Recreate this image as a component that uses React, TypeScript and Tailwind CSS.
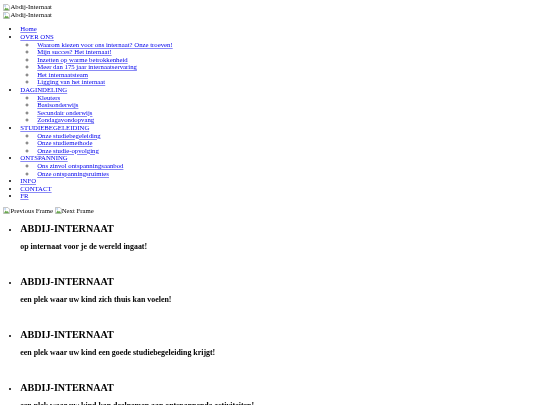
import React from 'react';

const menu = [
  { label: 'Home', items: [] },
  {
    label: 'OVER ONS',
    items: [
      'Waarom kiezen voor ons internaat? Onze troeven!',
      'Mijn succes? Het internaat!',
      'Inzetten op warme betrokkenheid',
      'Meer dan 175 jaar internaatservaring',
      'Het internaatsteam',
      'Ligging van het internaat',
    ],
  },
  { label: 'DAGINDELING', items: ['Kleuters', 'Basisonderwijs', 'Secundair onderwijs', 'Zondagavondopvang'] },
  { label: 'STUDIEBEGELEIDING', items: ['Onze studiebegeleiding', 'Onze studiemethode', 'Onze studie-opvolging'] },
  { label: 'ONTSPANNING', items: ['Ons zinvol ontspanningsaanbod', 'Onze ontspanningsruimtes'] },
  { label: 'INFO', items: [] },
  { label: 'CONTACT', items: [] },
  { label: 'FR', items: [] },
];

const slides = [
  'op internaat voor je de wereld ingaat!',
  'een plek waar uw kind zich thuis kan voelen!',
  'een plek waar uw kind een goede studiebegeleiding krijgt!',
  'een plek waar uw kind kan deelnemen aan ontspannende activiteiten!',
];

function BrokenImage({ alt }: { alt: string }) {
  return (
    <span className="inline-flex items-end">
      <svg width="7" height="7" viewBox="0 0 16 16" className="shrink-0">
        <path d="M1 1h10l4 4v10H1z" fill="#fff" stroke="#a3a3a3" strokeWidth="1.5" />
        <path d="M2 14l4-6 3 3 2-2 3 5z" fill="#6aa84f" />
        <path d="M3 3h4v3H3z" fill="#a8c7f0" />
      </svg>
      <span>{alt}</span>
    </span>
  );
}

export default function App() {
  return (
    <div className="h-[405px] overflow-hidden bg-white p-[3.4px] font-['Liberation_Serif',serif] text-[6.75px] leading-[7.6px] text-black blur-[0.25px]">
      {/* Logos */}
      <div className="flex flex-col">
        <BrokenImage alt="Abdij-Internaat" />
        <BrokenImage alt="Abdij-Internaat" />
      </div>

      {/* Menu */}
      <ul className="my-[6.75px] list-disc pl-[16.9px]">
        {menu.map((entry) => (
          <li key={entry.label}>
            <a href="#" className="text-[#0000ee] underline decoration-[#8a8af5] decoration-[0.5px]">{entry.label}</a>
            {entry.items.length > 0 && (
              <ul className="list-[circle] pl-[16.9px] marker:text-[#666]">
                {entry.items.map((item) => (
                  <li key={item}>
                    <a href="#" className="text-[#0000ee] underline decoration-[#8a8af5] decoration-[0.5px]">{item}</a>
                  </li>
                ))}
              </ul>
            )}
          </li>
        ))}
      </ul>

      {/* Slider arrows */}
      <div className="flex gap-[1.7px]">
        <BrokenImage alt="Previous Frame" />
        <BrokenImage alt="Next Frame" />
      </div>

      {/* Slides */}
      <ul className="my-[6.75px] list-disc pl-[16.9px]">
        {slides.map((text) => (
          <li key={text} className="pb-[7.3px]">
            <h2 className="mt-[8.4px] mb-[9px] text-[10.1px] leading-[11.5px] font-bold">ABDIJ-INTERNAAT</h2>
            <h3 className="mt-[9px] mb-[7.9px] text-[7.9px] leading-[8.9px] font-bold">{text}</h3>
          </li>
        ))}
      </ul>
    </div>
  );
}
